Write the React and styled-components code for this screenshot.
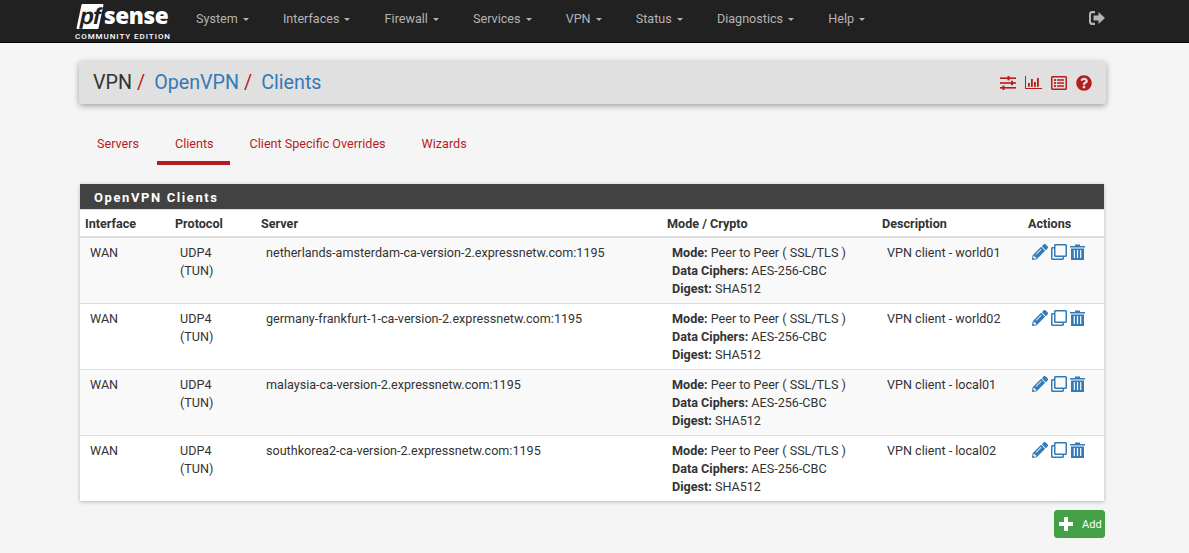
import React from "react";
import styled, { createGlobalStyle } from "styled-components";
import { FaPencilAlt, FaRegClone, FaRegListAlt, FaQuestionCircle } from "react-icons/fa";

const GlobalStyle = createGlobalStyle`
  html, body {
    margin: 0;
    background: #f5f5f5;
    font-family: Roboto, "Liberation Sans", sans-serif;
    font-size: 13px;
    color: #333;
    overflow: hidden;
  }
`;

const Page = styled.div`
  width: 1189px;
  height: 553px;
  overflow: hidden;
`;

const Navbar = styled.nav`
  height: 42px;
  background: #212121;
  border-bottom: 1px solid #000;
  display: flex;
  align-items: flex-start;
  padding-left: 75px;
  padding-right: 84px;
`;

const Logo = styled.div`
  width: 96px;
  height: 42px;
  flex: none;
  display: flex;
  flex-direction: column;
  align-items: flex-start;
  color: #fff;
`;

const LogoTop = styled.div`
  display: flex;
  align-items: center;
  height: 28px;
  padding: 2px 0 0 4px;
`;

const PfBox = styled.div`
  width: 22px;
  height: 25px;
  background: #fff;
  transform: skewX(-12deg);
  border-radius: 1px;
  color: #212121;
  display: flex;
  align-items: center;
  justify-content: center;
`;

const PfText = styled.span`
  font-family: "Liberation Sans", sans-serif;
  font-size: 23px;
  line-height: 25px;
  font-weight: 700;
  letter-spacing: -1px;
`;

const SenseText = styled.span`
  font-family: "Open Sans", "Liberation Sans", sans-serif;
  font-size: 22.5px;
  line-height: 24px;
  font-weight: 800;
  margin-left: 3px;
  letter-spacing: -0.4px;
`;

const LogoSub = styled.div`
  font-family: Roboto, "Liberation Sans", sans-serif;
  font-size: 8px;
  font-weight: 500;
  line-height: 9px;
  letter-spacing: 0.95px;
  margin-top: 2px;
  white-space: nowrap;
`;

const NavMenu = styled.div`
  display: flex;
  margin-left: 25px;
  flex: 1;
`;

const NavItem = styled.a`
  color: #b4b4b4;
  font-size: 12.6px;
  line-height: 37px;
  margin-right: 34.15px;
  display: flex;
  white-space: nowrap;
  &::after {
    content: "";
    align-self: center;
    margin-left: 5px;
    margin-top: 2px;
    border-top: 3px solid #b4b4b4;
    border-left: 3px solid transparent;
    border-right: 3px solid transparent;
  }
`;

const LogoutIcon = styled.svg`
  width: 16px;
  height: 14px;
  margin-top: 11px;
  fill: #b4b4b4;
`;

const Main = styled.main`
  margin-left: 79px;
  width: 1027px;
`;

const Breadcrumb = styled.div`
  margin-top: 18px;
  height: 43px;
  background: #e0e0e0;
  border-radius: 3px;
  box-shadow: 0 2px 6px rgba(0, 0, 0, 0.35);
  display: flex;
  align-items: center;
  padding: 0 14px;
  box-sizing: border-box;
  font-size: 19.7px;
`;

const Crumb = styled.a`
  color: ${(p) => (p.$link ? "#337ab7" : "#333")};
`;

const Slash = styled.span`
  color: #b71c1c;
  margin-left: 5px;
  margin-right: 9px;
`;

const CrumbIcons = styled.div`
  margin-left: auto;
  display: flex;
  align-items: center;
  gap: 9px;
  color: #b71c1c;
  svg {
    display: block;
  }
`;

const Tabs = styled.ul`
  list-style: none;
  margin: 18px 0 0;
  padding: 0;
  display: flex;
  height: 43px;
`;

const Tab = styled.li`
  color: #b71c1c;
  font-size: 12.6px;
  line-height: 44px;
  padding: ${(p) => (p.$active ? "0 16px 0 18px" : "0 18px")};
  margin-right: ${(p) => (p.$active ? "2px" : "0")};
  box-sizing: border-box;
  height: 43px;
  border-bottom: ${(p) => (p.$active ? "4px solid #b71c1c" : "none")};
`;

const Panel = styled.section`
  margin: 19px 2px 0 1px;
  background: #fff;
  box-shadow: 0 1px 4px rgba(0, 0, 0, 0.25);
`;

const PanelHeading = styled.h2`
  margin: 0;
  height: 25px;
  background: #424242;
  color: #fff;
  font-size: 13px;
  font-weight: 700;
  letter-spacing: 1.6px;
  line-height: 27px;
  padding-left: 14px;
`;

const Table = styled.table`
  width: 100%;
  table-layout: fixed;
  border-collapse: separate;
  border-spacing: 0;
`;

const Col = styled.col`
  width: ${(p) => p.$w}px;
`;

const Th = styled.th`
  text-align: left;
  font-size: 12.6px;
  font-weight: 700;
  height: 29px;
  padding: 1px 0 0 5px;
  box-sizing: border-box;
  border-bottom: 2px solid #ddd;
  border-top: 1px solid #ddd;
  color: #333;
`;

const Row = styled.tr`
  background: ${(p) => (p.$odd ? "#f9f9f9" : "#fff")};
`;

const Td = styled.td`
  height: 66px;
  box-sizing: border-box;
  vertical-align: top;
  padding: 6px 0 0 10px;
  font-size: 12.6px;
  line-height: 18px;
  color: #333;
  border-bottom: 1px solid #ddd;
  ${Row}:last-child & {
    height: 65px;
    border-bottom: none;
  }
`;

const ActionIcons = styled.div`
  display: flex;
  align-items: center;
  gap: 3px;
  margin-left: -1px;
  color: #337ab7;
  svg {
    display: block;
  }
`;

const Footer = styled.div`
  display: flex;
  justify-content: flex-end;
  margin-top: 9px;
  padding-right: 1px;
`;

const AddButton = styled.button`
  width: 51px;
  height: 28px;
  padding: 0 0 0 4px;
  border: 1px solid #43a047;
  border-radius: 3px;
  background: #43a047;
  color: #fff;
  font-family: Roboto, sans-serif;
  font-size: 11px;
  display: flex;
  align-items: center;
  gap: 9px;
`;

const SlidersIcon = () => (
  <svg width="16" height="14" viewBox="0 0 16 14" fill="currentColor">
    <rect x="0" y="1.4" width="16" height="1.6" />
    <rect x="7.500" y="0" width="2" height="4.400" />
    <rect x="0" y="6.200" width="16" height="1.600" />
    <rect x="11" y="4.800" width="2" height="4.400" />
    <rect x="0" y="11" width="16" height="1.600" />
    <rect x="2.500" y="9.600" width="2" height="4.400" />
  </svg>
);

const ChartIcon = () => (
  <svg width="17" height="13" viewBox="0 0 17 13" fill="currentColor">
    <rect x="0" y="0" width="1" height="13" />
    <rect x="0" y="12" width="17" height="1" />
    <rect x="3" y="7" width="1.800" height="3.800" />
    <rect x="6" y="3" width="1.800" height="7.800" />
    <rect x="9" y="6" width="1.800" height="4.800" />
    <rect x="12" y="2" width="1.800" height="8.800" />
  </svg>
);

const TrashIcon = () => (
  <svg width="15" height="16" viewBox="0 0 15 16" fill="currentColor">
    <path d="M0 2h5V.6h5V2h5v1.600H0z" />
    <path d="M1 4.400h13V16H1zM3.700 6v8h1.200V6zm3.200 0v8h1.200V6zm3.200 0v8h1.200V6z" fillRule="evenodd" />
  </svg>
);

const menu = ["System", "Interfaces", "Firewall", "Services", "VPN", "Status", "Diagnostics", "Help"];

const clients = [
  { server: "netherlands-amsterdam-ca-version-2.expressnetw.com:1195", description: "VPN client - world01" },
  { server: "germany-frankfurt-1-ca-version-2.expressnetw.com:1195", description: "VPN client - world02" },
  { server: "malaysia-ca-version-2.expressnetw.com:1195", description: "VPN client - local01" },
  { server: "southkorea2-ca-version-2.expressnetw.com:1195", description: "VPN client - local02" },
];

export default function App() {
  return (
    <Page>
      <GlobalStyle />
      <Navbar>
        <Logo>
          <LogoTop>
            <PfBox>
              <PfText>pf</PfText>
            </PfBox>
            <SenseText>sense</SenseText>
          </LogoTop>
          <LogoSub>COMMUNITY EDITION</LogoSub>
        </Logo>
        <NavMenu>
          {menu.map((m) => (
            <NavItem key={m}>{m}</NavItem>
          ))}
        </NavMenu>
        <LogoutIcon viewBox="0 0 16 14">
          <path d="M6 2.200H3.200c-.7 0-1.200.5-1.200 1.200v7.200c0 .7.5 1.200 1.200 1.200H6V14H3C1.300 14 0 12.700 0 11V3C0 1.300 1.300 0 3 0h3z" />
          <path d="M9.500 1 16 7l-6.500 6V9.500H4.500v-5h5z" />
        </LogoutIcon>
      </Navbar>
      <Main>
        <Breadcrumb>
          <Crumb>VPN</Crumb>
          <Slash>/</Slash>
          <Crumb $link>OpenVPN</Crumb>
          <Slash>/</Slash>
          <Crumb $link>Clients</Crumb>
          <CrumbIcons>
            <SlidersIcon />
            <ChartIcon />
            <FaRegListAlt size={16} />
            <FaQuestionCircle size={16} />
          </CrumbIcons>
        </Breadcrumb>
        <Tabs>
          <Tab>Servers</Tab>
          <Tab $active>Clients</Tab>
          <Tab>Client Specific Overrides</Tab>
          <Tab>Wizards</Tab>
        </Tabs>
        <Panel>
          <PanelHeading>OpenVPN Clients</PanelHeading>
          <Table>
            <colgroup>
              <Col $w={90} />
              <Col $w={86} />
              <Col $w={406} />
              <Col $w={215} />
              <Col $w={146} />
              <Col $w={81} />
            </colgroup>
            <thead>
              <tr>
                <Th>Interface</Th>
                <Th>Protocol</Th>
                <Th>Server</Th>
                <Th>Mode / Crypto</Th>
                <Th>Description</Th>
                <Th>Actions</Th>
              </tr>
            </thead>
            <tbody>
              {clients.map((c, i) => (
                <Row key={c.server} $odd={i % 2 === 0}>
                  <Td>WAN</Td>
                  <Td>
                    UDP4
                    <br />
                    (TUN)
                  </Td>
                  <Td>{c.server}</Td>
                  <Td>
                    <b>Mode:</b> Peer to Peer ( SSL/TLS )
                    <br />
                    <b>Data Ciphers:</b> AES-256-CBC
                    <br />
                    <b>Digest:</b> SHA512
                  </Td>
                  <Td>{c.description}</Td>
                  <Td>
                    <ActionIcons>
                      <FaPencilAlt size={16} />
                      <FaRegClone size={16} />
                      <TrashIcon />
                    </ActionIcons>
                  </Td>
                </Row>
              ))}
            </tbody>
          </Table>
        </Panel>
        <Footer>
          <AddButton>
            <svg width="14" height="14" viewBox="0 0 14 14" fill="#fff">
              <path d="M5 0h4v5h5v4H9v5H5V9H0V5h5z" />
            </svg>
            Add
          </AddButton>
        </Footer>
      </Main>
    </Page>
  );
}
